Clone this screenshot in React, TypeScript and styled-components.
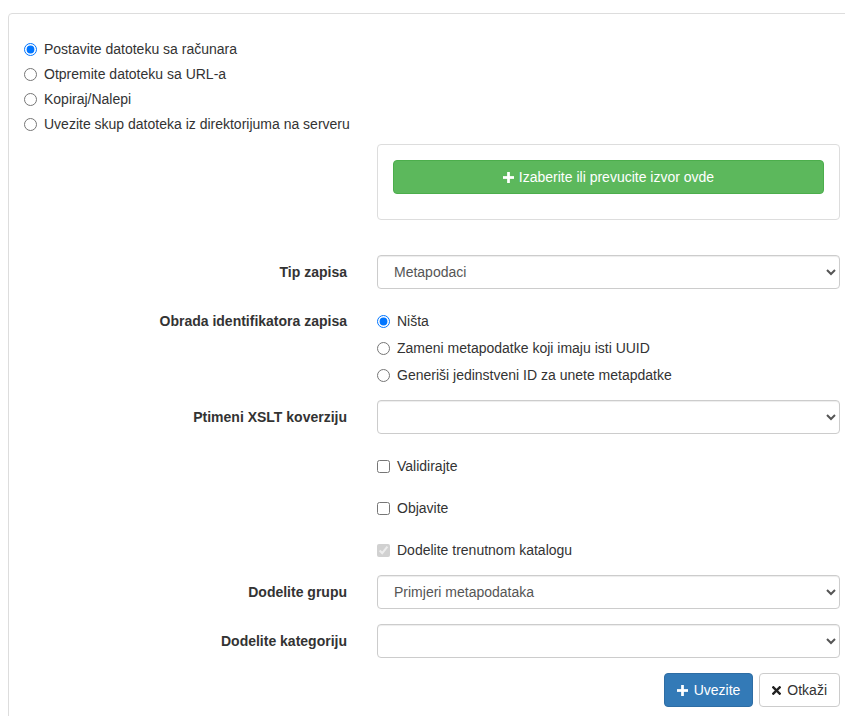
import styled, { createGlobalStyle } from "styled-components";

const GlobalStyle = createGlobalStyle`
  html {
    overflow: hidden;
  }
  body {
    margin: 8px 0 0 8px;
    background: #fff;
    color: #333;
    font-family: "Liberation Sans", Arial, Helvetica, sans-serif;
    font-size: 14px;
    line-height: 20px;
  }
  * {
    box-sizing: border-box;
  }
`;

const Panel = styled.div`
  margin-top: 5px;
  width: 848px;
  min-height: 760px;
  padding: 15px;
  border: 1px solid #ddd;
  border-radius: 4px;
  background: #fff;
`;

const SourceList = styled.div`
  display: flex;
  flex-direction: column;
  gap: 5px;
  margin: 10px 0 10px;
`;

const Option = styled.label<{ $stacked?: boolean }>`
  display: flex;
  align-items: flex-start;
  gap: 7px;
  min-height: ${(p) => (p.$stacked ? "27px" : "20px")};
  padding-top: ${(p) => (p.$stacked ? "7px" : "0")};
  color: #333;
  cursor: pointer;

  input {
    width: 13px;
    height: 13px;
    margin: 4px 0 0;
    flex-shrink: 0;
  }
`;

const FormRow = styled.div<{ $space?: number }>`
  display: grid;
  grid-template-columns: 323px 463px;
  column-gap: 30px;
  margin-bottom: ${(p) => p.$space ?? 15}px;
`;

const FieldLabel = styled.label`
  padding-top: 7px;
  text-align: right;
  font-weight: 700;
  color: #333;
`;

const FieldControl = styled.div`
  display: flex;
  flex-direction: column;
`;

const DropZone = styled.div`
  padding: 15px;
  border: 1px solid #ddd;
  border-radius: 4px;
  background: #fff;
`;

const PickButton = styled.button`
  display: flex;
  align-items: center;
  justify-content: center;
  gap: 5px;
  width: 100%;
  height: 34px;
  margin-bottom: 10px;
  border: 1px solid #4cae4c;
  border-radius: 4px;
  background: #5cb85c;
  color: #fff;
  font: inherit;
  cursor: pointer;
`;

const Select = styled.select`
  width: 100%;
  height: 34px;
  padding: 6px 12px;
  border: 1px solid #ccc;
  border-radius: 4px;
  background: #fff;
  box-shadow: inset 0 1px 1px rgba(0, 0, 0, 0.075);
  color: #555;
  font-family: inherit;
  font-size: 14px;
`;

const Actions = styled.div`
  display: flex;
  justify-content: flex-end;
  gap: 6px;
`;

const Button = styled.button<{ $primary?: boolean }>`
  display: inline-flex;
  align-items: center;
  gap: 6px;
  height: 34px;
  padding: 6px 12px;
  border: 1px solid ${(p) => (p.$primary ? "#2e6da4" : "#ccc")};
  border-radius: 4px;
  background: ${(p) => (p.$primary ? "#337ab7" : "#fff")};
  color: ${(p) => (p.$primary ? "#fff" : "#333")};
  font: inherit;
  cursor: pointer;
`;

const PlusIcon = () => (
  <svg width="11" height="11" viewBox="0 0 12 12" fill="currentColor">
    <rect x="0" y="4.5" width="12" height="3" />
    <rect x="4.5" y="0" width="3" height="12" />
  </svg>
);

const CrossIcon = () => (
  <svg width="9" height="9" viewBox="0 0 10 10" stroke="#222" strokeWidth="2.6" strokeLinecap="square">
    <line x1="1.5" y1="1.5" x2="8.5" y2="8.5" />
    <line x1="8.5" y1="1.5" x2="1.5" y2="8.5" />
  </svg>
);

const sources = [
  "Postavite datoteku sa računara",
  "Otpremite datoteku sa URL-a",
  "Kopiraj/Nalepi",
  "Uvezite skup datoteka iz direktorijuma na serveru",
];

const idModes = [
  "Ništa",
  "Zameni metapodatke koji imaju isti UUID",
  "Generiši jedinstveni ID za unete metapdatke",
];

export default function App() {
  return (
    <>
      <GlobalStyle />
      <Panel>
        <SourceList>
          {sources.map((s, i) => (
            <Option key={s}>
              <input type="radio" name="source" defaultChecked={i === 0} />
              {s}
            </Option>
          ))}
        </SourceList>

        <FormRow $space={35}>
          <div />
          <DropZone>
            <PickButton>
              <PlusIcon />
              Izaberite ili prevucite izvor ovde
            </PickButton>
          </DropZone>
        </FormRow>

        <FormRow>
          <FieldLabel>Tip zapisa</FieldLabel>
          <Select defaultValue="meta">
            <option value="meta">Metapodaci</option>
          </Select>
        </FormRow>

        <FormRow>
          <FieldLabel>Obrada identifikatora zapisa</FieldLabel>
          <FieldControl>
            {idModes.map((m, i) => (
              <Option $stacked key={m}>
                <input type="radio" name="uuid" defaultChecked={i === 0} />
                {m}
              </Option>
            ))}
          </FieldControl>
        </FormRow>

        <FormRow>
          <FieldLabel>Ptimeni XSLT koverziju</FieldLabel>
          <Select defaultValue="">
            <option value="" />
          </Select>
        </FormRow>

        <FormRow>
          <div />
          <Option $stacked>
            <input type="checkbox" />
            Validirajte
          </Option>
        </FormRow>

        <FormRow>
          <div />
          <Option $stacked>
            <input type="checkbox" />
            Objavite
          </Option>
        </FormRow>

        <FormRow>
          <div />
          <Option $stacked>
            <input type="checkbox" defaultChecked disabled />
            Dodelite trenutnom katalogu
          </Option>
        </FormRow>

        <FormRow>
          <FieldLabel>Dodelite grupu</FieldLabel>
          <Select defaultValue="sample">
            <option value="sample">Primjeri metapodataka</option>
          </Select>
        </FormRow>

        <FormRow>
          <FieldLabel>Dodelite kategoriju</FieldLabel>
          <Select defaultValue="">
            <option value="" />
          </Select>
        </FormRow>

        <FormRow>
          <div />
          <Actions>
            <Button $primary>
              <PlusIcon />
              Uvezite
            </Button>
            <Button>
              <CrossIcon />
              Otkaži
            </Button>
          </Actions>
        </FormRow>
      </Panel>
    </>
  );
}
